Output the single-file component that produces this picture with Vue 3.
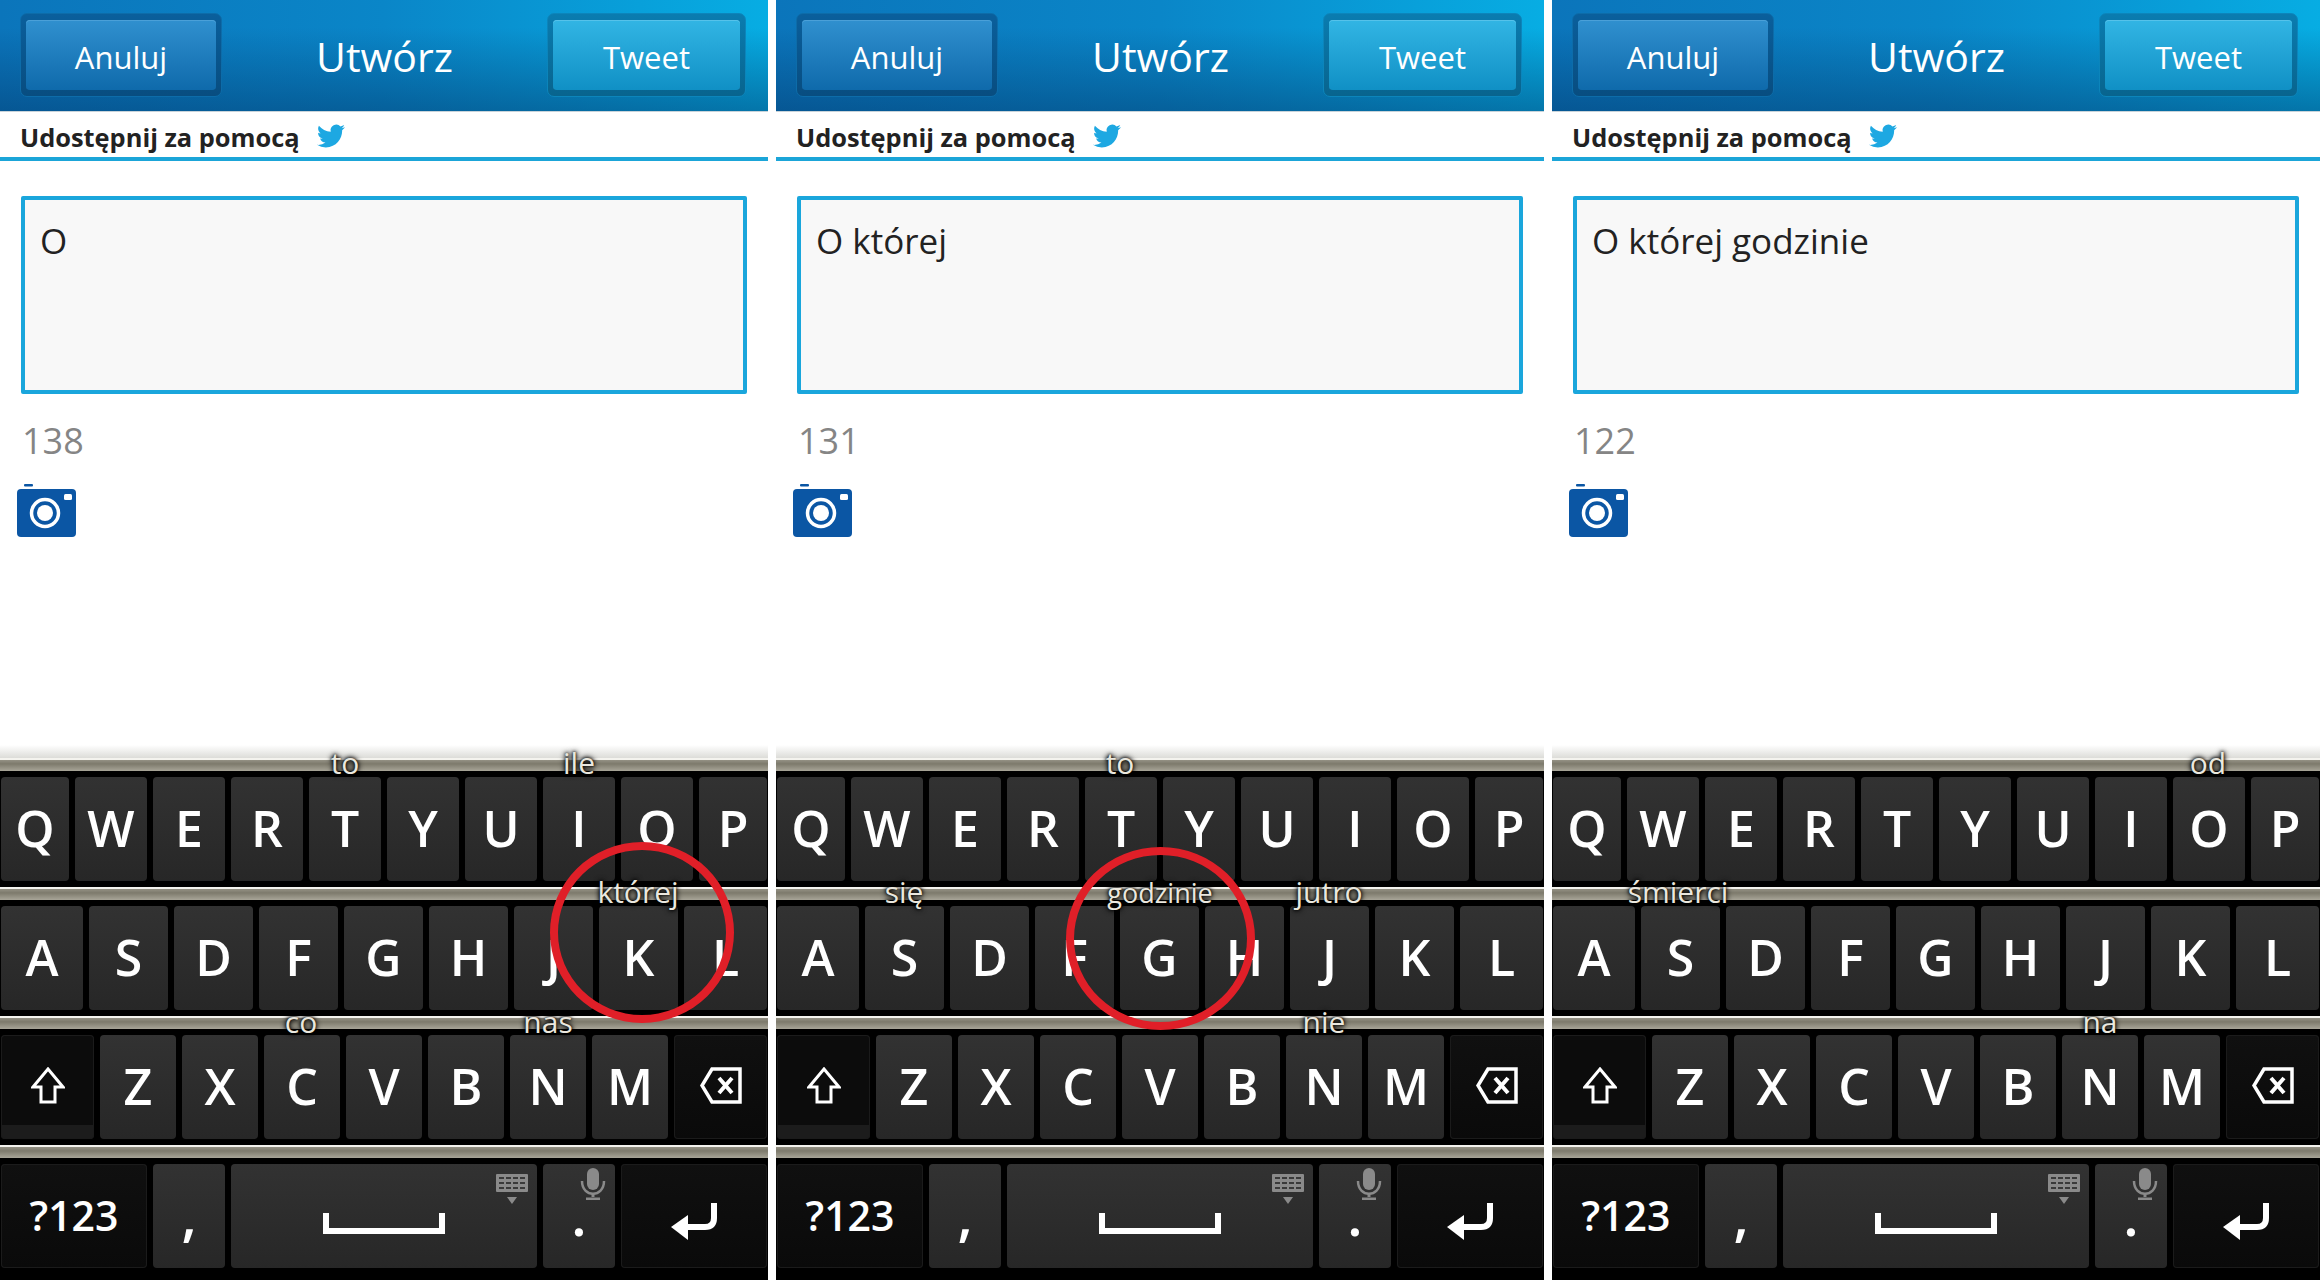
<script setup>
const rows = [
  { name: "top", keys: ["Q", "W", "E", "R", "T", "Y", "U", "I", "O", "P"] },
  { name: "home", keys: ["A", "S", "D", "F", "G", "H", "J", "K", "L"] },
  { name: "bottom", keys: ["Z", "X", "C", "V", "B", "N", "M"] },
];

const panels = [
  {
    text: "O",
    count: 138,
    hints: [
      { word: "to", x: 345, y: 763 },
      { word: "ile", x: 579, y: 763 },
      { word: "której", x: 638, y: 892 },
      { word: "co", x: 301, y: 1022 },
      { word: "nas", x: 548, y: 1022 },
    ],
    circle: { x: 550, y: 842, w: 184, h: 181 },
  },
  {
    text: "O której",
    count: 131,
    hints: [
      { word: "to", x: 344, y: 763 },
      { word: "się", x: 128, y: 892 },
      { word: "godzinie", x: 384, y: 893, small: true },
      { word: "jutro", x: 553, y: 892 },
      { word: "nie", x: 548, y: 1022 },
    ],
    circle: { x: 290, y: 847, w: 189, h: 183 },
  },
  {
    text: "O której godzinie",
    count: 122,
    hints: [
      { word: "od", x: 656, y: 763 },
      { word: "śmierci", x: 126, y: 892 },
      { word: "na", x: 548, y: 1022 },
    ],
  },
];

const KEYBOARD_TOP = 745;
</script>

<template>
  <div class="page">
    <section v-for="(panel, i) in panels" :key="i" class="panel">
      <header class="title-bar">
        <div class="btn-well"><div class="btn cancel">Anuluj</div></div>
        <h1 class="title">Utwórz</h1>
        <div class="btn-well tweet-well"><div class="btn tweet">Tweet</div></div>
      </header>

      <div class="share-row">
        <span>Udostępnij za pomocą</span>
        <svg class="bird" viewBox="0 0 24 24">
          <path
            fill="#1da8e2"
            d="M23.953 4.57a10 10 0 01-2.825.775 4.958 4.958 0 002.163-2.723c-.951.555-2.005.959-3.127 1.184a4.92 4.92 0 00-8.384 4.482C7.69 8.095 4.067 6.13 1.64 3.162a4.822 4.822 0 00-.666 2.475c0 1.71.87 3.213 2.188 4.096a4.904 4.904 0 01-2.228-.616v.06a4.923 4.923 0 003.946 4.827 4.996 4.996 0 01-2.212.085 4.936 4.936 0 004.604 3.417 9.867 9.867 0 01-6.102 2.105c-.39 0-.779-.023-1.17-.067a13.995 13.995 0 007.557 2.209c9.053 0 13.998-7.496 13.998-13.985 0-.21 0-.42-.015-.63A9.935 9.935 0 0024 4.59z"
          />
        </svg>
      </div>

      <div class="compose">{{ panel.text }}</div>
      <div class="count">{{ panel.count }}</div>

      <svg class="camera" viewBox="0 0 60 54">
        <rect x="7" y="0" width="9" height="2.5" rx="1" fill="#0b56a4" />
        <rect x="0" y="5" width="59" height="48" rx="4" fill="#0b56a4" />
        <rect x="47" y="10" width="8" height="6" rx="1.5" fill="#fff" />
        <circle cx="28" cy="29" r="13.5" fill="none" stroke="#fff" stroke-width="3.5" />
        <circle cx="28" cy="29" r="8" fill="#fff" />
      </svg>

      <div class="keyboard">
        <div class="fade"></div>

        <div v-for="row in rows" :key="row.name" class="kb-row">
          <div class="bar"></div>
          <div class="keys" :class="row.name">
            <div v-if="row.name === 'bottom'" class="key special shift">
              <svg width="34" height="37" viewBox="0 0 34 37">
                <path d="M17 2 L32 20 H24 V35 H10 V20 H2 Z" fill="none" stroke="#fff" stroke-width="3" />
              </svg>
            </div>
            <div v-for="k in row.keys" :key="k" class="key">{{ k }}</div>
            <div v-if="row.name === 'bottom'" class="key special">
              <svg width="42" height="37" viewBox="0 0 42 37">
                <path d="M12 2 H40 V35 H12 L2 18.5 Z" fill="none" stroke="#fff" stroke-width="3.5" />
                <path d="M19 11 L32 26 M32 11 L19 26" stroke="#fff" stroke-width="4" />
              </svg>
            </div>
          </div>
        </div>

        <div class="kb-row">
          <div class="bar"></div>
          <div class="keys last">
            <div class="key special sym">?123</div>
            <div class="key punct">,</div>
            <div class="key space">
              <svg class="kb-icon" width="32" height="34" viewBox="0 0 32 34">
                <rect x="0" y="0" width="32" height="18" rx="1" fill="#8a8a8a" />
                <path d="M3 4h26M3 9h26M3 14h26" stroke="#3a3a3a" stroke-width="2" stroke-dasharray="5 2" />
                <path d="M11 23h10l-5 7z" fill="#8a8a8a" />
              </svg>
              <svg width="122" height="21" viewBox="0 0 122 21">
                <path d="M3 0 V18 H119 V0" fill="none" stroke="#fff" stroke-width="6" />
              </svg>
            </div>
            <div class="key punct">
              <svg class="mic" width="26" height="32" viewBox="0 0 26 32">
                <rect x="7" y="0" width="12" height="22" rx="6" fill="#8a8a8a" />
                <path d="M2 13 C2 30 24 30 24 13" fill="none" stroke="#8a8a8a" stroke-width="2.5" />
                <path d="M13 25 V29 M6 31 H20" stroke="#8a8a8a" stroke-width="3" />
              </svg>
              .
            </div>
            <div class="key special enter">
              <svg width="46" height="38" viewBox="0 0 46 38">
                <path d="M43 0 V15 Q43 24 34 24 H14" fill="none" stroke="#fff" stroke-width="6" />
                <path d="M0 24 L17 12 V37 Z" fill="#fff" />
              </svg>
            </div>
          </div>
        </div>

        <span
          v-for="hint in panel.hints"
          :key="hint.word"
          class="hint"
          :class="{ small: hint.small }"
          :style="{ left: hint.x + 'px', top: hint.y - KEYBOARD_TOP + 'px' }"
        >{{ hint.word }}</span>
      </div>

      <div
        v-if="panel.circle"
        class="ring"
        :style="{
          left: panel.circle.x + 'px',
          top: panel.circle.y + 'px',
          width: panel.circle.w + 'px',
          height: panel.circle.h + 'px',
        }"
      ></div>
    </section>
  </div>
</template>

<style scoped>
.page {
  display: flex;
  gap: 8px;
  width: 2320px;
  height: 1280px;
  overflow: hidden;
  background: #fff;
  font-family: "Open Sans", "Noto Sans", sans-serif;
}

.panel {
  position: relative;
  flex: 0 0 768px;
  height: 1280px;
  display: flex;
  flex-direction: column;
}

.title-bar {
  height: 111px;
  box-sizing: border-box;
  padding: 13px 22px 14px 20px;
  display: flex;
  align-items: stretch;
  justify-content: space-between;
  background:
    linear-gradient(180deg, rgba(0, 60, 110, 0) 25%, rgba(0, 50, 100, 0.45) 100%),
    linear-gradient(90deg, #0b75bb 0%, #0a86c8 50%, #07ade3 100%);
  box-shadow: 0 1px 0 #c9d3d9;
}

.btn-well {
  width: 202px;
  box-sizing: border-box;
  padding: 6px 5px;
  border-radius: 7px;
  background: linear-gradient(180deg, #0a5f9c 0%, #084d80 100%);
  border: 1px solid #0d6ca9;
  display: flex;
}

.tweet-well {
  width: 199px;
  background: linear-gradient(180deg, #0a7cb0 0%, #08648e 100%);
  border-color: #0c85bb;
}

.btn {
  flex: 1;
  display: flex;
  align-items: center;
  justify-content: center;
  padding-top: 4px;
  border-radius: 4px;
  color: #fff;
  font-size: 31px;
}

.cancel {
  background: linear-gradient(180deg, #3090cf 0%, #0f6aab 100%);
  box-shadow: inset 0 1px 0 #4aa0d8;
}

.tweet {
  background: linear-gradient(180deg, #32b5e4 0%, #1090c5 100%);
  box-shadow: inset 0 1px 0 #55c2ea;
}

.title {
  margin: 0;
  padding-top: 2px;
  align-self: center;
  font-size: 41px;
  font-weight: 400;
  color: #fff;
}

.share-row {
  height: 40px;
  padding: 6px 0 0 20px;
  border-bottom: 4px solid #1ba5d8;
  display: flex;
  align-items: center;
  gap: 17px;
  font-size: 25.4px;
  font-weight: 700;
  color: #222;
}

.bird {
  width: 28px;
  height: 28px;
  margin-top: -2px;
}

.compose {
  margin: 35px 21px 0;
  height: 198px;
  box-sizing: border-box;
  border: 4px solid #1aa6dc;
  border-radius: 2px;
  background: #f8f8f8;
  padding: 19px 15px;
  font-size: 35px;
  line-height: 44px;
  color: #222;
}

.count {
  margin: 27px 0 0 22px;
  font-size: 36px;
  line-height: 40px;
  color: #858585;
}

.camera {
  display: block;
  margin: 23px 0 0 17px;
  width: 60px;
  height: 54px;
}

.keyboard {
  position: relative;
  margin-top: auto;
  background: #000;
  padding-bottom: 6px;
}

.fade {
  height: 13px;
  background: linear-gradient(180deg, #fff, #dcdcd8);
}

.bar {
  height: 13px;
  background:
    linear-gradient(180deg, #f4f3ee 0, #f4f3ee 2px, rgba(255, 255, 255, 0) 2px),
    linear-gradient(180deg, #a09d91 0%, #7d7a6c 45%, #a8a598 100%);
}

.keys {
  display: grid;
  column-gap: 6px;
  padding: 6px 1px;
  height: 104px;
  box-sizing: content-box;
}

.top {
  grid-template-columns: 68px repeat(8, 72px) 68px;
}

.home {
  grid-template-columns: 82px repeat(7, 79px) 83px;
}

.bottom {
  grid-template-columns: 93px repeat(7, 76px) 93px;
}

.last {
  grid-template-columns: 146px 72px 306px 72px 146px;
}

.key {
  position: relative;
  display: flex;
  align-items: center;
  justify-content: center;
  box-sizing: border-box;
  padding-bottom: 3px;
  border-radius: 4px;
  background: linear-gradient(180deg, #323232 0%, #272727 100%);
  color: #fff;
  font-size: 50px;
  font-weight: 600;
}

.special {
  background: linear-gradient(180deg, #101010 0%, #0a0a0a 100%);
  box-shadow: inset 0 0 0 1px #1b1b1b;
}

.shift {
  background: linear-gradient(180deg, #0c0c0c 0, #0c0c0c 87%, #1c1c1c 87%);
}

.sym {
  font-size: 41px;
  font-weight: 600;
}

.punct {
  align-items: flex-end;
  padding-bottom: 26px;
  font-size: 56px;
  line-height: 56px;
}

.space {
  padding-top: 18px;
}

.enter {
  padding-top: 15px;
}

.kb-icon {
  position: absolute;
  right: 9px;
  top: 10px;
}

.mic {
  position: absolute;
  right: 9px;
  top: 4px;
}

.hint {
  position: absolute;
  transform: translate(-50%, -50%);
  font-size: 30px;
  line-height: 34px;
  color: #ebe8df;
  white-space: nowrap;
  text-shadow: 0 0 3px #000, 0 0 5px #000, 0 0 6px rgba(0, 0, 0, 0.8);
}

.small {
  font-size: 27px;
}

.ring {
  position: absolute;
  box-sizing: border-box;
  border: 8px solid #e01f28;
  border-radius: 50%;
}
</style>
